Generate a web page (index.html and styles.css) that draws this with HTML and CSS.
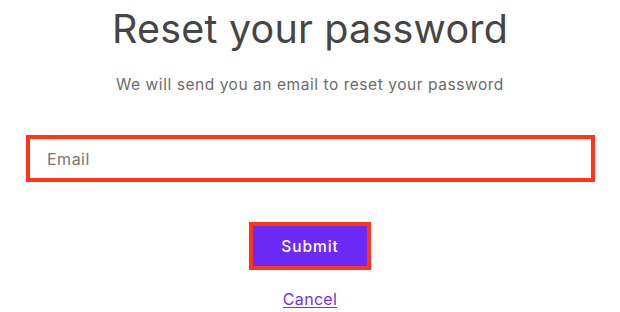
FILE: index.html
```html
<!DOCTYPE html>
<html lang="en">
<head>
<meta charset="utf-8">
<title>Reset your password</title>
<link rel="stylesheet" href="styles.css">
</head>
<body>
<main class="page">
  <h1 class="title">Reset your password</h1>
  <p class="subtitle">We will send you an email to reset your password</p>
  <form class="form">
    <input class="email" type="email" placeholder="Email">
    <button class="submit" type="button">Submit</button>
    <a class="cancel" href="#">Cancel</a>
  </form>
</main>
</body>
</html>
```
FILE: styles.css
```css
html, body {
  margin: 0;
  padding: 0;
  background: #ffffff;
}
body {
  font-family: Inter, "Liberation Sans", sans-serif;
  width: 620px;
  height: 312px;
  overflow: hidden;
}
.page {
  display: flex;
  flex-direction: column;
  align-items: center;
}
.title {
  margin: 5px 0 0;
  font-size: 39.5px;
  line-height: 48px;
  font-weight: 400;
  color: #454545;
  letter-spacing: 0.2px;
}
.subtitle {
  margin: 22px 0 0;
  font-size: 15.5px;
  line-height: 20px;
  color: #6b6b6b;
  letter-spacing: 0.55px;
}
.form {
  display: flex;
  flex-direction: column;
  align-items: center;
  width: 100%;
  margin-top: 40px;
}
.email {
  box-sizing: border-box;
  width: 569px;
  height: 47px;
  margin: 0 25px 0 26px;
  align-self: flex-start;
  border: 4px solid #ff3419;
  padding: 0 17px;
  font-family: inherit;
  font-size: 16px;
  color: #333;
  outline: none;
  background: #fff;
}
.email::placeholder {
  color: #767676;
  letter-spacing: 0.5px;
}
.submit {
  box-sizing: border-box;
  width: 122px;
  height: 48px;
  margin-top: 40px;
  border: 4px solid #ff3419;
  background: #6c2af7;
  color: #ffffff;
  font-family: inherit;
  font-size: 15.5px;
  font-weight: 500;
  letter-spacing: 0.9px;
  padding: 0;
}
.cancel {
  margin-top: 19px;
  font-size: 16px;
  line-height: 20px;
  color: #7430f5;
  text-decoration: underline;
  text-underline-offset: 2px;
  letter-spacing: 0.3px;
}
```
